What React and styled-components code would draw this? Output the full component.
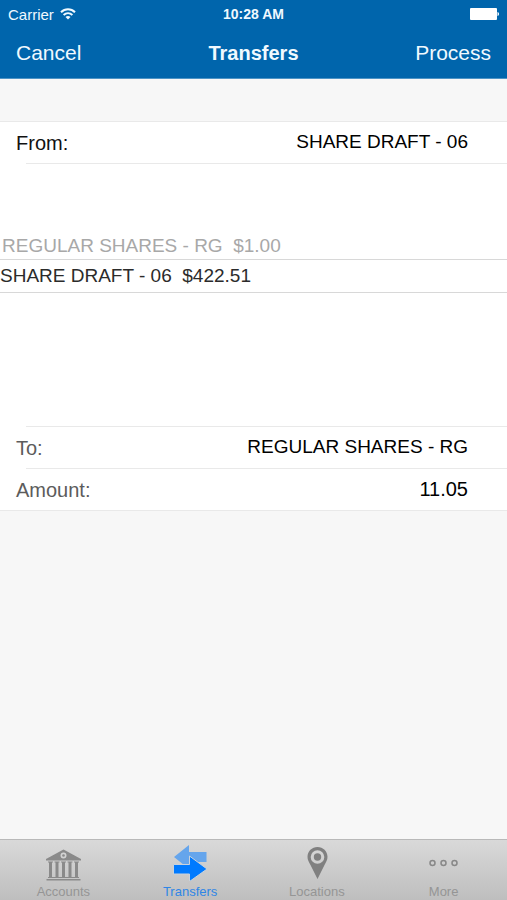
import React, { useState } from "react";
import styled, { createGlobalStyle } from "styled-components";

const GlobalStyle = createGlobalStyle`
  * {
    box-sizing: border-box;
  }

  body {
    margin: 0;
    background-color: #f7f7f7;
    font-family: "Liberation Sans", Arial, sans-serif;
  }

  button,
  input {
    font-family: inherit;
  }
`;

const Screen = styled.div`
  display: flex;
  flex-direction: column;
  min-height: 100vh;
`;

const Header = styled.header`
  background-color: #0065ac;
  color: #f0f9ff;
  border-bottom: 1px solid #4d94c6;
`;

const StatusBar = styled.div`
  display: grid;
  grid-template-columns: 1fr auto 1fr;
  align-items: center;
  height: 28px;
  padding: 0 8px;
  font-size: 15px;
`;

const Carrier = styled.span`
  display: flex;
  align-items: center;
  gap: 6px;
`;

const Time = styled.span`
  font-size: 14px;
  font-weight: bold;
`;

const Battery = styled.svg`
  justify-self: end;
`;

const NavBar = styled.nav`
  display: grid;
  grid-template-columns: 1fr auto 1fr;
  align-items: center;
  height: 50px;
  padding: 0 16px;
`;

const NavButton = styled.button`
  justify-self: ${({ $align }) => $align};
  padding: 0;
  border: none;
  background: none;
  color: inherit;
  font-size: 21px;
  line-height: 24px;
`;

const Title = styled.h1`
  margin: 0;
  font-size: 20px;
  line-height: 24px;
`;

const Form = styled.form`
  margin-top: 42px;
  background-color: #fff;
  border-top: 1px solid #e9e9e9;
  border-bottom: 1px solid #e9e9e9;
`;

const Row = styled.div`
  display: flex;
  align-items: center;
  justify-content: space-between;
  height: 41px;
  padding: 0 39px 0 16px;
`;

const Separator = styled.hr`
  height: 1px;
  margin: 0 0 0 26px;
  border: none;
  background-color: #e9e9e9;
`;

const Label = styled.label`
  color: ${({ $active }) => ($active ? "#111" : "#5c5c5c")};
  font-size: 20px;
  line-height: 24px;
`;

const AccountButton = styled.button`
  padding: 0 0 2px;
  border: none;
  background: none;
  color: #000;
  font-size: 19px;
  line-height: 24px;
`;

const AmountInput = styled.input`
  flex: 1;
  min-width: 0;
  padding: 0 0 2px;
  border: none;
  outline: none;
  background: none;
  color: #000;
  font-size: 20px;
  line-height: 24px;
  text-align: right;
`;

const Picker = styled.div`
  height: 262px;
  padding-top: 69px;
`;

const Option = styled.label`
  display: flex;
  align-items: center;
  height: ${({ $selected }) => ($selected ? 34 : 26)}px;
  padding-left: ${({ $selected }) => ($selected ? 0 : 2)}px;
  border: solid #d8d8d8;
  border-width: ${({ $selected }) => ($selected ? "1px 0" : "0")};
  color: ${({ $selected }) => ($selected ? "#2b2b2b" : "#a8a8a8")};
  font-size: 19px;
  white-space: pre;
`;

const Radio = styled.input`
  appearance: none;
  width: 0;
  height: 0;
  margin: 0;
`;

const TabBar = styled.nav`
  display: grid;
  grid-template-columns: repeat(4, 1fr);
  height: 61px;
  margin-top: auto;
  border-top: 1px solid #b9b9b9;
  background: linear-gradient(#d9d9d9, #bebebe);
`;

const Tab = styled.a`
  display: flex;
  flex-direction: column;
  align-items: center;
  justify-content: space-between;
  padding: 5px 0 1px;
  color: ${({ $active }) => ($active ? "#2f86e6" : "#959595")};
  font-size: 13px;
  line-height: 14px;
  text-decoration: none;
`;

const WifiIcon = () => (
  <svg width="16" height="12" viewBox="0 0 16 12" fill="none" stroke="currentColor" strokeWidth="2" aria-hidden="true">
    <path d="M1 4.2C5 .2 11 .2 15 4.2M3.6 7C6.2 4.6 9.8 4.6 12.4 7" />
    <path d="M5.5 8.9C7 7.6 9 7.6 10.5 8.9L8 11.5Z" fill="currentColor" stroke="none" />
  </svg>
);

const BatteryIcon = () => (
  <Battery width="29" height="12" viewBox="0 0 29 12" fill="#fff" role="img" aria-label="Battery full">
    <rect width="27" height="12" rx="1" />
    <path d="M27.5 4c2 .4 2 3.600 0 4z" />
  </Battery>
);

const AccountsIcon = () => (
  <svg width="36" height="36" viewBox="0 0 36 36" fill="#8a8a8a" aria-hidden="true">
    <path fillRule="evenodd" d="M18.500 4.500 36 14v1.500H1V14ZM18.500 7.500a3 3 0 1 0 0 6 3 3 0 0 0 0-6Z" />
    <circle cx="18.500" cy="10.500" r="1.300" />
    <path d="M3 16.500h5v1H3zM9.500 16.500h5v1h-5zM16 16.500h5v1h-5zM22.500 16.500h5v1h-5zM29 16.500h5v1h-5z" />
    <path d="M4 17h3v15H4zM10.500 17h3v15h-3zM17 17h3v15h-3zM23.500 17h3v15h-3zM30 17h3v15h-3z" />
    <path d="M3 32h31v1H3zM1.500 34h34v1.500H1.500z" />
  </svg>
);

const TransfersIcon = () => (
  <svg width="36" height="36" viewBox="0 0 36 36" aria-hidden="true">
    <path fill="#65a5ec" d="M2 12 17 0v7h17.500v10H17v7Z" />
    <path fill="#007aff" stroke="#c8d2dd" d="M1.500 19.500h16V11L35 24 17.500 36.500V29h-16Z" />
  </svg>
);

const LocationsIcon = () => (
  <svg width="36" height="36" viewBox="0 0 36 36" fill="#808080" aria-hidden="true">
    <path fillRule="evenodd" d="M18.500 2C12.900 2 8.500 6.300 8.500 11.800c0 3 1.200 5.200 3 8.200l7 14 7-14c1.800-3 3-5.200 3-8.200C28.500 6.300 24.100 2 18.500 2Zm0 3.200a6.800 6.800 0 1 1 0 13.600 6.800 6.800 0 0 1 0-13.600Z" />
    <circle cx="18.500" cy="12" r="3.700" />
  </svg>
);

const MoreIcon = () => (
  <svg width="36" height="36" viewBox="0 0 36 36" fill="none" stroke="#888" strokeWidth="1.500" aria-hidden="true">
    <circle cx="6.500" cy="18" r="2.500" />
    <circle cx="17.500" cy="18" r="2.500" />
    <circle cx="28.500" cy="18" r="2.500" />
  </svg>
);

const accounts = [
  { name: "REGULAR SHARES - RG", balance: "$1.00" },
  { name: "SHARE DRAFT - 06", balance: "$422.51" }
];

const tabs = [
  { name: "Accounts", Icon: AccountsIcon },
  { name: "Transfers", Icon: TransfersIcon },
  { name: "Locations", Icon: LocationsIcon },
  { name: "More", Icon: MoreIcon }
];

const App = () => {
  const [from, setFrom] = useState("SHARE DRAFT - 06");
  const [amount, setAmount] = useState("11.05");

  return (
    <Screen>
      <GlobalStyle />
      <Header>
        <StatusBar>
          <Carrier>Carrier <WifiIcon /></Carrier>
          <Time>10:28 AM</Time>
          <BatteryIcon />
        </StatusBar>
        <NavBar>
          <NavButton type="button" $align="start">Cancel</NavButton>
          <Title>Transfers</Title>
          <NavButton type="submit" form="transfer" $align="end">Process</NavButton>
        </NavBar>
      </Header>

      <Form id="transfer" onSubmit={e => e.preventDefault()}>
        <Row>
          <Label htmlFor="from" $active>From:</Label>
          <AccountButton id="from" type="button">{from}</AccountButton>
        </Row>
        <Separator />

        {/* Account picker */}
        <Picker role="radiogroup" aria-label="From account">
          {accounts.map(({ name, balance }) => (
            <Option key={name} $selected={name === from}>
              <Radio type="radio" name="account" checked={name === from} onChange={() => setFrom(name)} />
              {`${name}  ${balance}`}
            </Option>
          ))}
        </Picker>

        <Separator />
        <Row>
          <Label htmlFor="to">To:</Label>
          <AccountButton id="to" type="button">REGULAR SHARES - RG</AccountButton>
        </Row>
        <Separator />
        <Row>
          <Label htmlFor="amount">Amount:</Label>
          <AmountInput id="amount" inputMode="decimal" value={amount} onChange={e => setAmount(e.target.value)} />
        </Row>
      </Form>

      <TabBar>
        {tabs.map(({ name, Icon }) => (
          <Tab key={name} href={`#${name.toLowerCase()}`} $active={name === "Transfers"}>
            <Icon />
            {name}
          </Tab>
        ))}
      </TabBar>
    </Screen>
  );
};

export default App;
